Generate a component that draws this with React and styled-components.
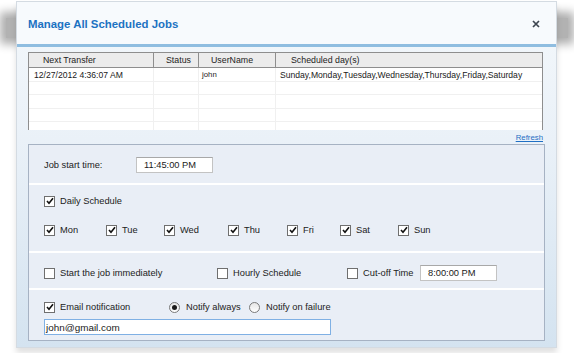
import React from "react";
import styled, { createGlobalStyle } from "styled-components";

const Global = createGlobalStyle`
  html, body { margin: 0; padding: 0; background: #ffffff; }
  body { font-family: "Liberation Sans", Arial, sans-serif; color: #222; }
  * { box-sizing: border-box; }
`;

const Page = styled.div`
  width: 574px;
  height: 353px;
  overflow: hidden;
  padding: 1px 0 0 16px;
  position: relative;
  &::before {
    content: "";
    position: absolute;
    left: 6px;
    right: 6px;
    top: 18px;
    height: 20px;
    box-shadow: 0 0 10px 6px rgba(0, 0, 0, 0.32);
    background: rgba(0, 0, 0, 0.3);
    z-index: 0;
  }
`;

const Dialog = styled.div`
  position: relative;
  z-index: 1;
  width: 541px;
  height: 347px;
  border: 1px solid #d4dbe2;
  display: flex;
  flex-direction: column;
  background: linear-gradient(#f4f8fb 0%, #eaf1f8 40%, #d4e3f0 100%);
  box-shadow: 0 5px 6px rgba(0, 0, 0, 0.12);
`;

const Header = styled.div`
  height: 42px;
  flex: none;
  display: flex;
  align-items: center;
  justify-content: space-between;
  padding: 0 16px 0 11px;
  background: #f7fafd;
`;

const Title = styled.div`
  font-size: 11.4px;
  font-weight: bold;
  color: #1c72c2;
  padding-top: 2px;
`;

const Close = styled.svg`
  width: 8px;
  height: 8px;
  margin-top: 1px;
`;

const BlueBar = styled.div`
  height: 3px;
  flex: none;
  background: #8fbde0;
`;

const Body = styled.div`
  padding: 5px 11px 0 11px;
  display: flex;
  flex-direction: column;
`;

const Table = styled.div`
  width: 515px;
  height: 78px;
  background: #fff;
  border-left: 1px solid #8e8e8e;
  border-top: 1px solid #8e8e8e;
  border-right: 1px solid #8e8e8e;
  overflow: hidden;
  display: flex;
  flex-direction: column;
`;

const HeadRow = styled.div`
  display: grid;
  grid-template-columns: 125px 45px 77px 1fr;
  height: 15px;
  flex: none;
  background: #ececec;
  border-bottom: 1px solid #8e8e8e;
`;

const HeadCell = styled.div`
  font-size: 8.8px;
  color: #222;
  padding-left: ${(p) => p.$pad}px;
  display: flex;
  align-items: center;
  border-right: ${(p) => (p.$last ? "none" : "1px solid #8e8e8e")};
`;

const Row = styled.div`
  display: grid;
  grid-template-columns: 125px 45px 77px 1fr;
  height: 13.5px;
  flex: none;
  border-bottom: 1px solid #f0f0f0;
`;

const Cell = styled.div`
  font-size: ${(p) => (p.$small ? "7.8px" : "8.6px")};
  color: #1a1a1a;
  padding-left: ${(p) => p.$pad}px;
  padding-top: 1px;
  display: flex;
  align-items: center;
  white-space: nowrap;
  border-right: ${(p) => (p.$last ? "none" : "1px solid #f0f0f0")};
`;

const RefreshBar = styled.div`
  height: 14px;
  width: 515px;
  display: flex;
  justify-content: flex-end;
  align-items: center;
`;

const Refresh = styled.a`
  font-size: 7.8px;
  color: #1f6fc4;
  text-decoration: underline;
  cursor: pointer;
`;

const Panel = styled.div`
  width: 517px;
  border: 1px solid #a6b2c3;
  background: #e9eef6;
  display: flex;
  flex-direction: column;
`;

const Section = styled.div`
  height: ${(p) => p.$h}px;
  padding: ${(p) => p.$pt}px 14px 0 15px;
  display: flex;
  flex-direction: column;
  gap: ${(p) => p.$gap || 0}px;
  & + & {
    border-top: 2px solid #ffffff;
  }
`;

const Line = styled.div`
  display: flex;
  align-items: center;
  height: 16px;
  font-size: 9.3px;
`;

const FieldLabel = styled.span`
  width: ${(p) => p.$w}px;
  flex: none;
`;

const TextBox = styled.div`
  width: ${(p) => p.$w}px;
  height: 16px;
  background: #fff;
  border: 1px solid ${(p) => (p.$focus ? "#7fb0e4" : "#c3c3c3")};
  border-top-color: ${(p) => (p.$focus ? "#7fb0e4" : "#a8a8a8")};
  display: flex;
  align-items: center;
  padding-left: ${(p) => (p.$focus ? 1 : 7)}px;
  font-size: ${(p) => (p.$focus ? "9.9px" : "9.3px")};
  color: #1a1a1a;
`;

const Item = styled.label`
  display: flex;
  align-items: center;
  width: ${(p) => (p.$w ? `${p.$w}px` : "auto")};
  flex: none;
  gap: 5px;
`;

const Box = styled.span`
  width: 11px;
  height: 11px;
  flex: none;
  background: #fff;
  border: 1px solid #6f6f6f;
  display: flex;
  align-items: center;
  justify-content: center;
`;

const Radio = styled.span`
  width: 11px;
  height: 11px;
  flex: none;
  border-radius: 50%;
  background: linear-gradient(#e6e6e6, #ffffff);
  border: 1px solid #7a7a7a;
  display: flex;
  align-items: center;
  justify-content: center;
  margin-right: 1px;
  &::after {
    content: "";
    width: 5px;
    height: 5px;
    border-radius: 50%;
    background: ${(p) => (p.$on ? "#1a1a1a" : "transparent")};
  }
`;

const Check = ({ on }) => (
  <Box>
    {on && (
      <svg width="8" height="8" viewBox="0 0 8 8">
        <path d="M1 4 L3 6.3 L7 1.2" fill="none" stroke="#111" strokeWidth="1.6" />
      </svg>
    )}
  </Box>
);

const CheckItem = ({ on, w, children }) => (
  <Item $w={w}>
    <Check on={on} />
    <span>{children}</span>
  </Item>
);

const days = [
  ["Mon", 62],
  ["Tue", 58],
  ["Wed", 64],
  ["Thu", 59],
  ["Fri", 53],
  ["Sat", 58],
  ["Sun", 0],
];

export default function App() {
  return (
    <>
      <Global />
      <Page>
        <Dialog>
          <Header>
            <Title>Manage All Scheduled Jobs</Title>
            <Close viewBox="0 0 8 8">
              <path d="M1 1 L7 7 M7 1 L1 7" stroke="#3d4550" strokeWidth="1.7" />
            </Close>
          </Header>
          <BlueBar />
          <Body>
            <Table>
              <HeadRow>
                <HeadCell $pad={14}>Next Transfer</HeadCell>
                <HeadCell $pad={12}>Status</HeadCell>
                <HeadCell $pad={12}>UserName</HeadCell>
                <HeadCell $pad={15} $last>Scheduled day(s)</HeadCell>
              </HeadRow>
              <Row>
                <Cell $pad={5}>12/27/2012 4:36:07 AM</Cell>
                <Cell $pad={5}></Cell>
                <Cell $pad={3} $small>john</Cell>
                <Cell $pad={4} $last>Sunday,Monday,Tuesday,Wednesday,Thursday,Friday,Saturday</Cell>
              </Row>
              {[0, 1, 2, 3].map((i) => (
                <Row key={i}>
                  <Cell />
                  <Cell />
                  <Cell />
                  <Cell $last />
                </Row>
              ))}
            </Table>
            <RefreshBar>
              <Refresh>Refresh</Refresh>
            </RefreshBar>
            <Panel>
              <Section $h={38} $pt={12}>
                <Line>
                  <FieldLabel $w={92}>Job start time:</FieldLabel>
                  <TextBox $w={77}>11:45:00 PM</TextBox>
                </Line>
              </Section>
              <Section $h={68} $pt={8} $gap={13}>
                <Line>
                  <CheckItem on>Daily Schedule</CheckItem>
                </Line>
                <Line>
                  {days.map(([d, w]) => (
                    <CheckItem key={d} on w={w || undefined}>
                      {d}
                    </CheckItem>
                  ))}
                </Line>
              </Section>
              <Section $h={37} $pt={12}>
                <Line>
                  <CheckItem w={173}>Start the job immediately</CheckItem>
                  <CheckItem w={130}>Hourly Schedule</CheckItem>
                  <CheckItem w={73}>Cut-off Time</CheckItem>
                  <TextBox $w={77}>8:00:00 PM</TextBox>
                </Line>
              </Section>
              <Section $h={52} $pt={9} $gap={4}>
                <Line>
                  <CheckItem on w={125}>Email notification</CheckItem>
                  <Item $w={80}>
                    <Radio $on />
                    <span>Notify always</span>
                  </Item>
                  <Item>
                    <Radio />
                    <span>Notify on failure</span>
                  </Item>
                </Line>
                <Line>
                  <TextBox $w={287} $focus>john@gmail.com</TextBox>
                </Line>
              </Section>
            </Panel>
          </Body>
        </Dialog>
      </Page>
    </>
  );
}
